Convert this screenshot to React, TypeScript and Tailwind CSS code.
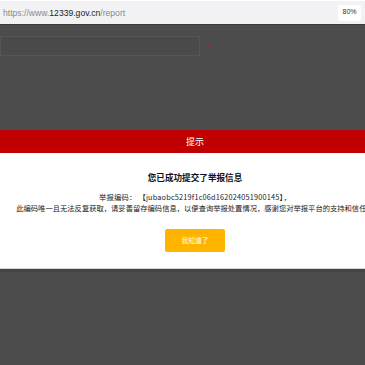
import React from 'react';

const font = "font-['Microsoft_YaHei','Noto_Sans_CJK_SC',sans-serif]";

const AddressBar: React.FC = () => (
    <div className="h-[25px] w-full bg-[#f2f2f5] border-t border-white border-b border-b-[#3a3a3a] flex items-center justify-between pl-[3px] pr-[4px]">
        <div className="text-[8.6px] font-['Liberation_Sans','Noto_Sans_CJK_SC',sans-serif] text-[#8a8a8a] leading-none pt-[1px]">
            https://www.<span className="text-[#222]">12339.gov.cn</span>/report
        </div>
        <div className="bg-white h-[16px] w-[23px] flex items-center justify-center rounded-[2px] text-[7px] text-[#333] font-['Liberation_Sans',sans-serif]">80%</div>
    </div>
);

export default function App() {
    return (
        <div className="w-[365px] h-[365px] overflow-hidden bg-[#4c4c4c]">
            <AddressBar />
            <div className="w-[390px]">
                <div className="flex h-[105px] pt-[11px] items-start">
                    <div className="w-[200px] h-[20px] border border-[#555] bg-[#4a4a4a]" />
                    <div className="ml-[7px] mt-[9px] w-[2px] h-[2px] bg-[#a03020]" />
                </div>
                <div className={`h-[23px] bg-[#c00000] flex items-center justify-center text-white text-[9px] ${font}`}>提示</div>
                <div className={`bg-white h-[116px] border-b border-[#d8d8d8] flex flex-col items-center ${font}`}>
                    <div className="mt-[19px] text-[8.6px] font-bold text-[#111] leading-[10px]">您已成功提交了举报信息</div>
                    <div className="mt-[10px] text-[7.3px] text-[#222] leading-[11px] text-center whitespace-nowrap">
                        <div className="tracking-[0.2px]">举报编码： 【jubaobc5219f1c06d162024051900145】，</div>
                        <div>此编码唯一且无法反复获取，请妥善留存编码信息，以便查询举报处置情况，感谢您对举报平台的支持和信任！</div>
                    </div>
                    <button className="mt-[15px] w-[60px] h-[23px] bg-[#ffb400] rounded-[2px] text-white text-[6.8px] flex items-center justify-center">我知道了</button>
                </div>
                <div className="h-[3px] bg-[#444]" />
            </div>
        </div>
    );
}
